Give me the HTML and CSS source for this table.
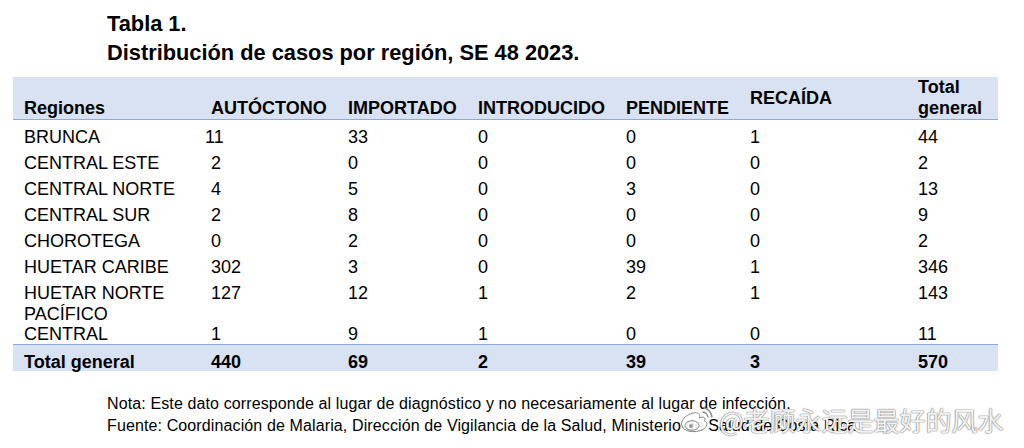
FILE: index.html
```html
<!DOCTYPE html>
<html lang="es">
<head>
<meta charset="utf-8">
<title>Tabla 1</title>
<link rel="stylesheet" href="styles.css">
</head>
<body>
<div class="page">
  <h1 class="title">Tabla 1.<br>Distribución de casos por región, SE 48 2023.</h1>
  <table class="data">
    <colgroup>
      <col class="c-reg"><col class="c-aut"><col class="c-imp"><col class="c-int"><col class="c-pen"><col class="c-rec"><col class="c-tot">
    </colgroup>
    <thead>
      <tr>
        <th>Regiones</th>
        <th>AUTÓCTONO</th>
        <th>IMPORTADO</th>
        <th>INTRODUCIDO</th>
        <th>PENDIENTE</th>
        <th class="mid">RECAÍDA</th>
        <th>Total general</th>
      </tr>
    </thead>
    <tbody>
      <tr><td>BRUNCA</td><td class="nudge">11</td><td>33</td><td>0</td><td>0</td><td>1</td><td>44</td></tr>
      <tr><td>CENTRAL ESTE</td><td>2</td><td>0</td><td>0</td><td>0</td><td>0</td><td>2</td></tr>
      <tr><td>CENTRAL NORTE</td><td>4</td><td>5</td><td>0</td><td>3</td><td>0</td><td>13</td></tr>
      <tr><td>CENTRAL SUR</td><td>2</td><td>8</td><td>0</td><td>0</td><td>0</td><td>9</td></tr>
      <tr><td>CHOROTEGA</td><td>0</td><td>2</td><td>0</td><td>0</td><td>0</td><td>2</td></tr>
      <tr><td>HUETAR CARIBE</td><td>302</td><td>3</td><td>0</td><td>39</td><td>1</td><td>346</td></tr>
      <tr><td>HUETAR NORTE</td><td>127</td><td>12</td><td>1</td><td>2</td><td>1</td><td>143</td></tr>
      <tr class="tight"><td>PACÍFICO<br>CENTRAL</td><td>1</td><td>9</td><td>1</td><td>0</td><td>0</td><td>11</td></tr>
    </tbody>
    <tfoot>
      <tr><td>Total general</td><td>440</td><td>69</td><td>2</td><td>39</td><td>3</td><td>570</td></tr>
    </tfoot>
  </table>
  <div class="notes">
    <p>Nota: Este dato corresponde al lugar de diagnóstico y no necesariamente al lugar de infección.</p>
    <p>Fuente: Coordinación de Malaria, Dirección de Vigilancia de la Salud, Ministerio de Salud de Costa Rica</p>
  </div>
  <div class="watermark">
    <svg class="wb-logo" width="34" height="28" viewBox="0 0 34 28" aria-hidden="true">
      <path d="M14 7 C6 9 1 15 3 20 C5 26 16 27 23 24 C29 21 29 16 25.5 15 C27 11.5 24.5 10 20.5 12 C21.5 8 19 6 14 7Z" fill="rgba(255,255,255,0.9)" stroke="#8a8a8a" stroke-width="1"/>
      <ellipse cx="13" cy="19.5" rx="7" ry="4.8" fill="none" stroke="#8a8a8a" stroke-width="1"/>
      <circle cx="12" cy="20" r="2" fill="#9a9a9a"/>
      <path d="M23.5 6 A6 6 0 0 1 29 11.5" fill="none" stroke="#8a8a8a" stroke-width="1.4"/>
      <path d="M23.5 1.5 A10.5 10.5 0 0 1 33 11.5" fill="none" stroke="#8a8a8a" stroke-width="1.4"/>
    </svg>
    <span class="wb-text">@老顾永远是最好的风水</span>
  </div>
</div>
</body>
</html>
```
FILE: styles.css
```css
html, body {
  margin: 0;
  padding: 0;
  background: #ffffff;
}

body {
  font-family: "Liberation Sans", Arial, sans-serif;
  color: #000000;
}

.page {
  position: relative;
  width: 1024px;
  height: 448px;
  box-sizing: border-box;
  padding-top: 9px;
  overflow: hidden;
}

.title {
  margin: 0 0 10px 107px;
  font-size: 21.8px;
  line-height: 29px;
  font-weight: bold;
}

.data {
  margin-left: 13px;
  width: 985px;
  border-collapse: collapse;
  table-layout: fixed;
  font-size: 18px;
}

.c-reg { width: 198px; }
.c-aut { width: 137px; }
.c-imp { width: 130px; }
.c-int { width: 148px; }
.c-pen { width: 124px; }
.c-rec { width: 168px; }
.c-tot { width: 80px; }

.data th {
  background: #d9e2f3;
  text-align: left;
  vertical-align: bottom;
  font-weight: bold;
  padding: 0;
  line-height: 21px;
  border-bottom: 1px solid #8eaadb;
}

.data th.mid {
  vertical-align: middle;
}

.data td {
  padding: 8px 0 0 0;
  line-height: 18px;
  vertical-align: bottom;
  text-align: left;
  white-space: nowrap;
}

.data th:first-child,
.data td:first-child {
  padding-left: 11px;
}

.data td.nudge {
  text-indent: -6px;
}

.data tr.tight td {
  padding-top: 2px;
  line-height: 20px;
}

.data tfoot td {
  background: #d9e2f3;
  font-weight: bold;
  border-top: 1px solid #8eaadb;
}

.notes {
  margin: 22px 0 0 107px;
  font-size: 16px;
  letter-spacing: 0.12px;
  line-height: 22px;
}

.notes p {
  margin: 0;
}

.watermark {
  position: absolute;
  left: 679px;
  top: 404px;
  display: flex;
  align-items: center;
  gap: 6px;
}

.wb-text {
  font-family: "Noto Sans CJK SC", "Noto Sans", sans-serif;
  font-size: 26px;
  line-height: 32px;
  color: rgba(255, 255, 255, 0.93);
  text-shadow: 0 0 1px #7a7a7a, 0 0 1px #7a7a7a, 0 0 2px rgba(0, 0, 0, 0.25);
}
```
